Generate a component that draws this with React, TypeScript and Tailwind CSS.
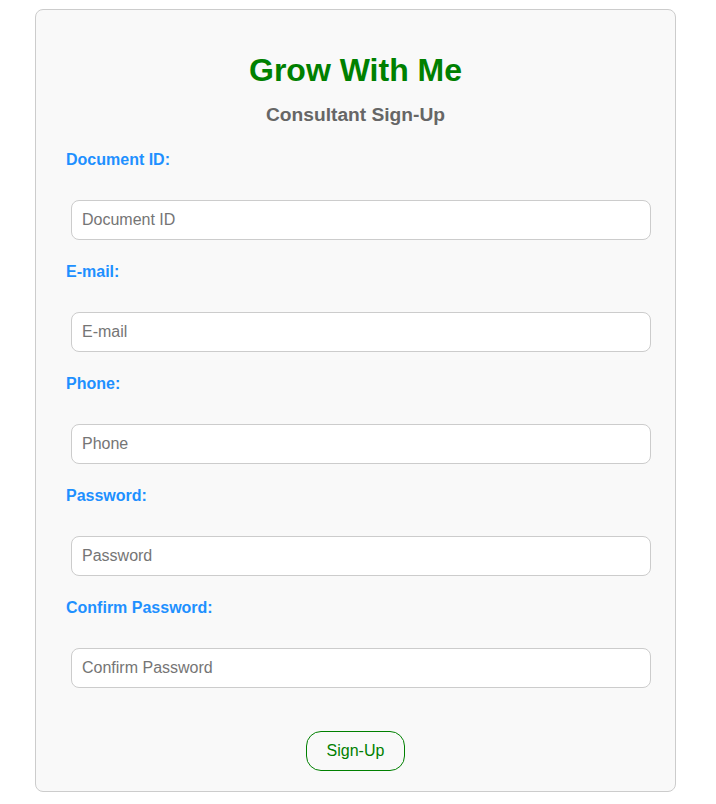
import React from "react";

// 입력 필드 정의
interface Field {
    label: string;
    placeholder: string;
    type: string;
}

const fields: Field[] = [
    { label: "Document ID:", placeholder: "Document ID", type: "text" },
    { label: "E-mail:", placeholder: "E-mail", type: "email" },
    { label: "Phone:", placeholder: "Phone", type: "tel" },
    { label: "Password:", placeholder: "Password", type: "password" },
    { label: "Confirm Password:", placeholder: "Confirm Password", type: "password" },
];

const App = (): JSX.Element => {
    return (
        <div className="min-h-screen bg-white pt-[9px] font-['Liberation_Sans',Arial,sans-serif]">
            <div className="ml-[35px] w-[641px] bg-[#f9f9f9] border border-[#cccccc] rounded-[8px] pt-[42px] pb-[20px] pl-[30px] pr-[24px] flex flex-col">
                <h1 className="text-center text-[32px] leading-[37px] font-bold text-[#008000] -ml-[6px]">
                    Grow With Me
                </h1>
                <h3 className="mt-[15px] text-center text-[19.2px] leading-[22px] font-bold text-[#666666] -ml-[6px]">
                    Consultant Sign-Up
                </h3>
                <form className="flex flex-col mt-[25px]">
                    {fields.map((f, idx) => (
                        <div key={idx} className={idx > 0 ? "mt-[23px]" : ""}>
                            <label className="block text-[16px] leading-[18px] font-bold text-[#1e90ff]">
                                {f.label}
                            </label>
                            <input
                                type={f.type}
                                placeholder={f.placeholder}
                                className="mt-[31px] ml-[5px] block w-[580px] h-[40px] px-[10px] bg-white border border-[#cccccc] rounded-[8px] text-[16px] text-[#333] placeholder:text-[#757575] focus:outline-none"
                            />
                        </div>
                    ))}
                    <div className="flex justify-center mt-[43px] -ml-[6px]">
                        <button
                            type="button"
                            className="h-[40px] px-[20px] border border-[#008000] rounded-[15px] bg-transparent text-[#008000] text-[16px]"
                        >
                            Sign-Up
                        </button>
                    </div>
                </form>
            </div>
        </div>
    );
};

export default App;
